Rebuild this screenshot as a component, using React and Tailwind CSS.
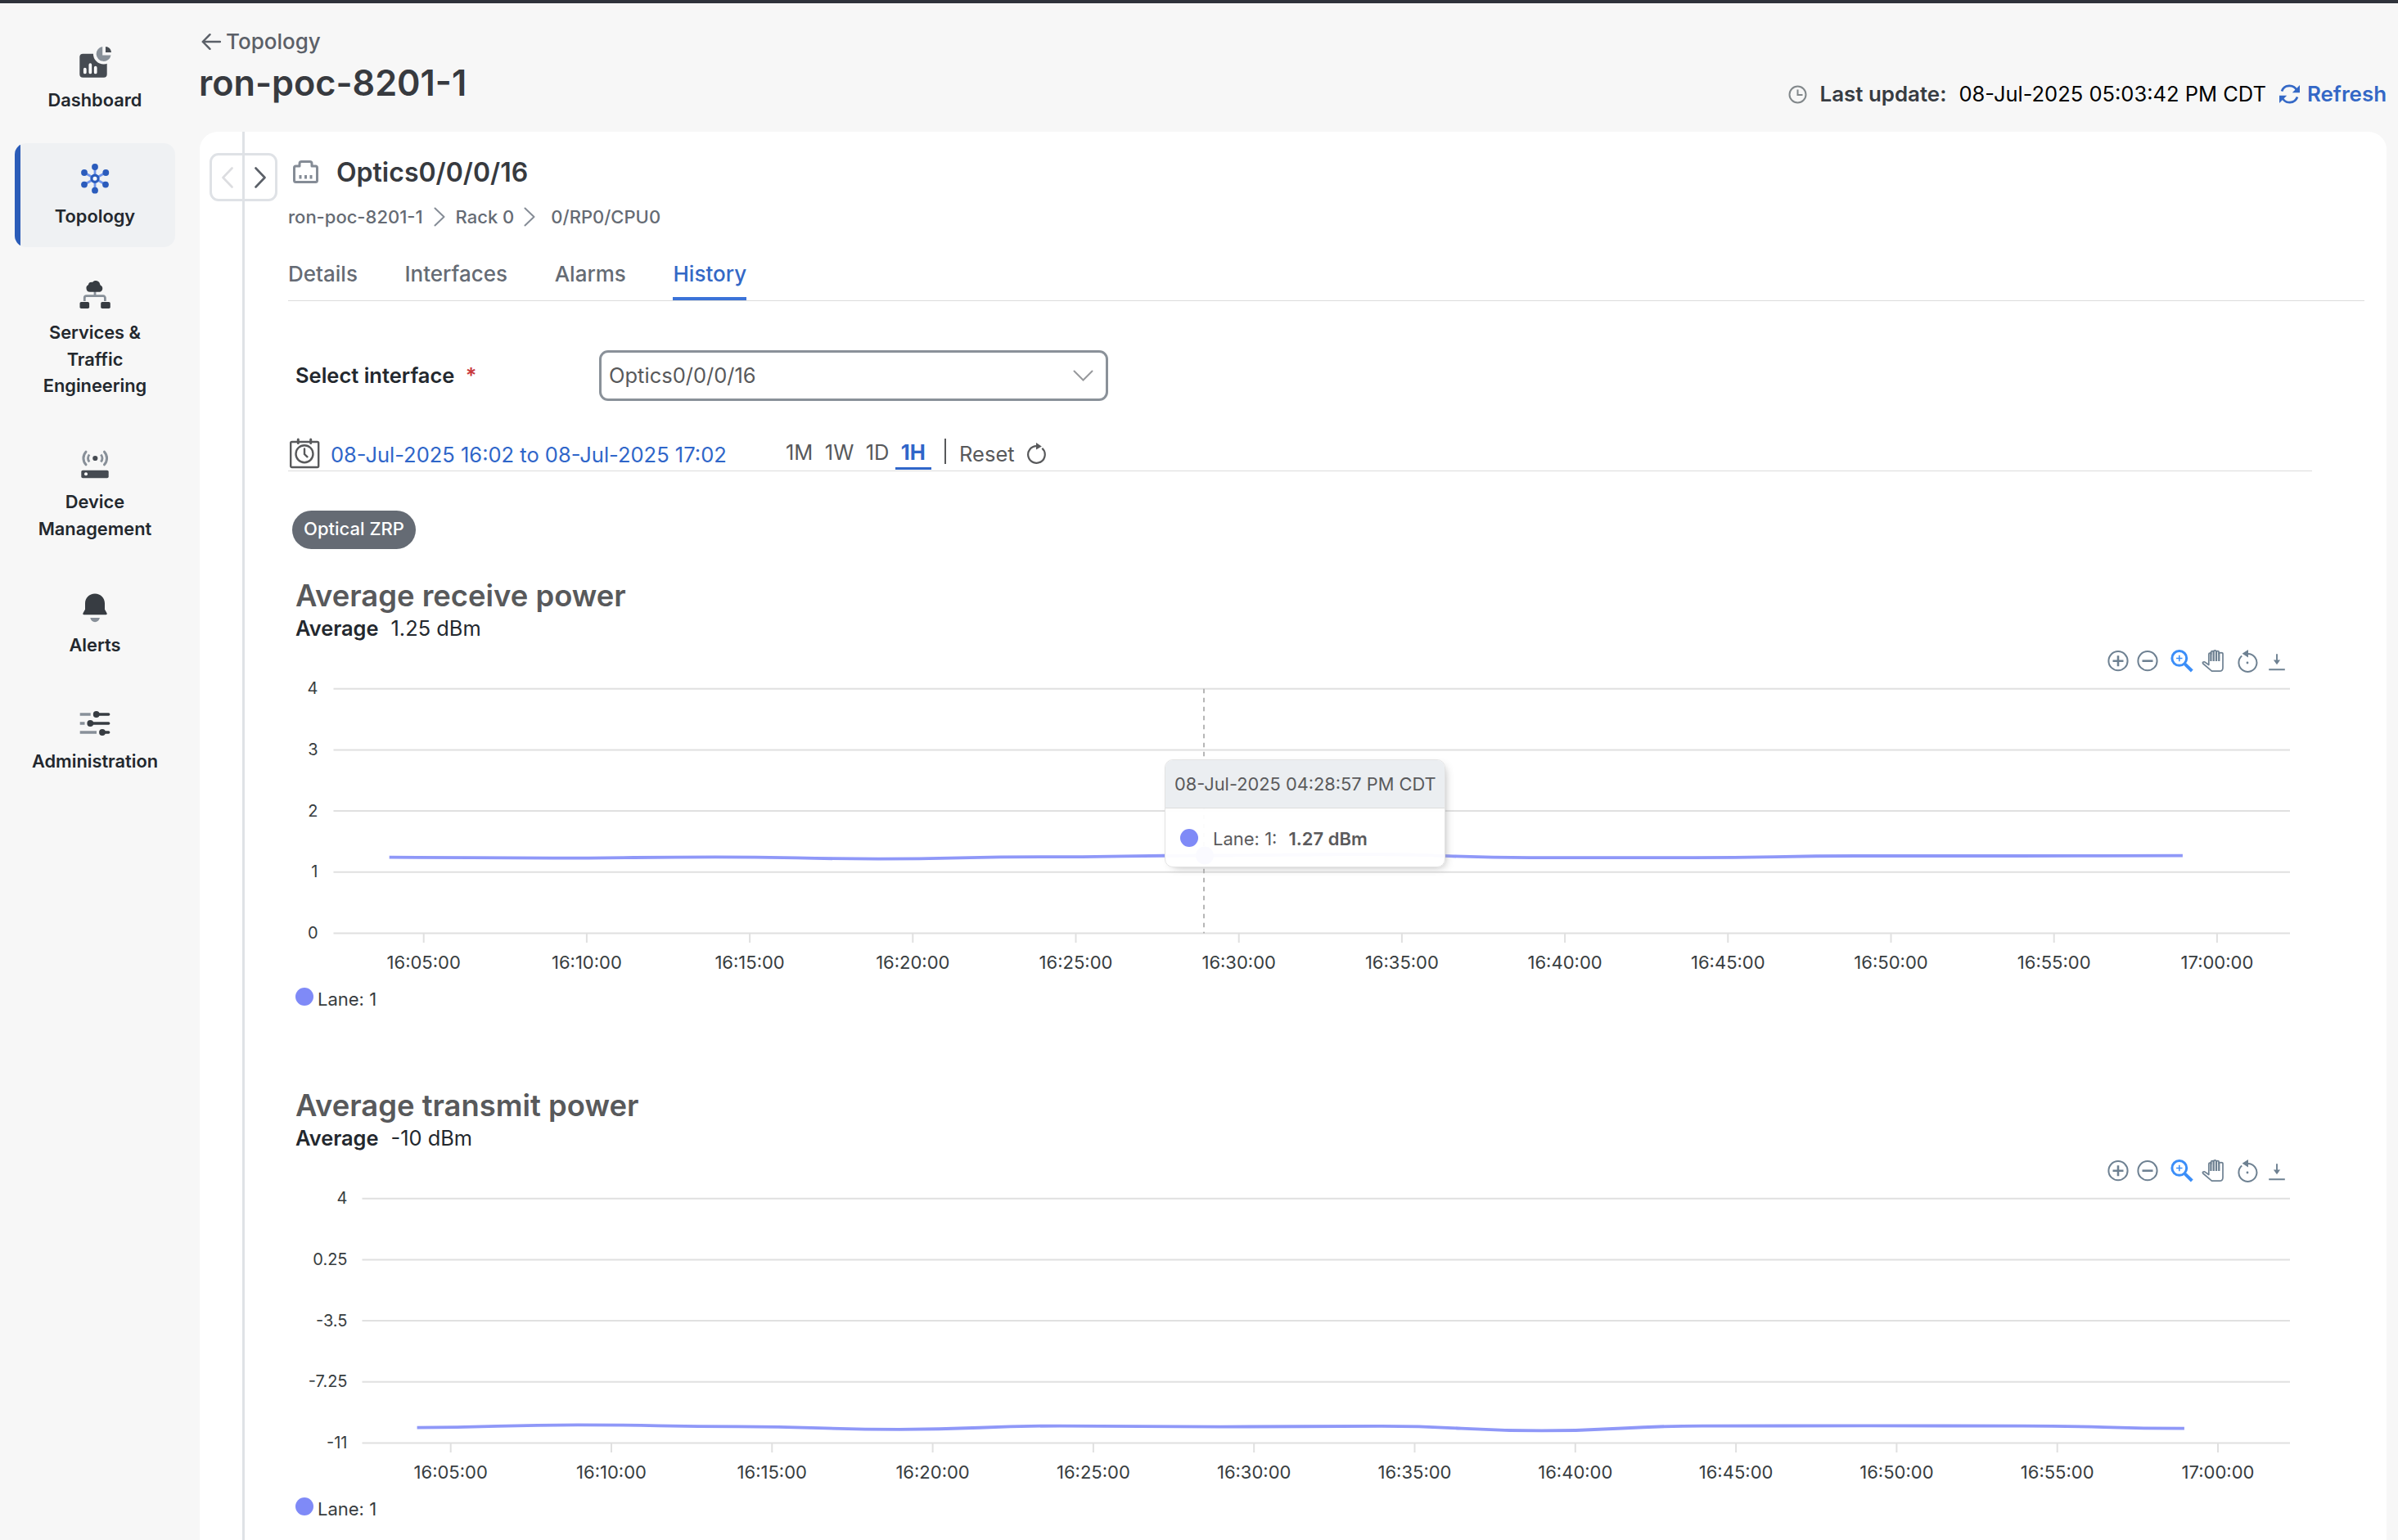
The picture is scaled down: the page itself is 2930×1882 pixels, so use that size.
import React, { useState } from 'react'

const navItems = [
  { id: 'dashboard', label: 'Dashboard' },
  { id: 'topology', label: 'Topology' },
  { id: 'services', label: 'Services & Traffic Engineering' },
  { id: 'device', label: 'Device Management' },
  { id: 'alerts', label: 'Alerts' },
  { id: 'admin', label: 'Administration' },
]

const tabs = ['Details', 'Interfaces', 'Alarms', 'History']
const ranges = ['1M', '1W', '1D', '1H']

const times = [
  '16:05:00', '16:10:00', '16:15:00', '16:20:00', '16:25:00', '16:30:00',
  '16:35:00', '16:40:00', '16:45:00', '16:50:00', '16:55:00', '17:00:00',
]

const receiveChart = {
  title: 'Average receive power',
  average: '1.25 dBm',
  yLabels: ['4', '3', '2', '1', '0'],
  left: 55.5,
  labelRight: 36.5,
  firstTick: 165.7,
  step: 199.2,
  firstPoint: 123.7,
  points: [225.7, 226.7, 225.3, 227.6, 225.2, 223.5, 222, 226.2, 226.2, 224, 224, 223.6],
}

const transmitChart = {
  title: 'Average transmit power',
  average: '-10 dBm',
  yLabels: ['4', '0.25', '-3.5', '-7.25', '-11'],
  left: 90.5,
  labelRight: 72.5,
  firstTick: 198.7,
  step: 196.3,
  firstPoint: 157.6,
  points: [299.6, 296.3, 298.4, 301.9, 297.6, 298.6, 297.9, 303.4, 297.6, 297.4, 297.6, 300.6],
}

const NavIcon = ({ id }) => {
  const dark = '#373c42'
  const grey = '#889099'
  return (
    <svg width="40" height="40" viewBox="0 0 40 40" fill="none" className="shrink-0">
      {id === 'dashboard' && (
        <>
          <rect x="1.3" y="9.7" width="33.4" height="29" rx="4" fill="#464b52" />
          <circle cx="30.7" cy="9.7" r="12.8" fill="#f7f7f7" />
          <path d="M29.2 1v10.4h10.3A9 9 0 1 1 29.2 1z" fill={grey} />
          <path d="M33 1a7.2 7.2 0 0 1 7 7h-7z" fill="#464b52" />
          <path d="M7.8 28.5v4M14.3 23.2v9.3M20.7 26.7v5.8" stroke="#fff" strokeWidth="3.7" strokeLinecap="round" />
        </>
      )}
      {id === 'topology' && (
        <>
          <path d="M20 6v29M7 13l26 14.5M33 13L7 27.5" stroke="#6f95ec" strokeWidth="2.8" />
          <circle cx="20" cy="20.3" r="4.1" fill="#fff" stroke="#2b5cbc" strokeWidth="3.2" />
          {[[20, 6], [20, 34.7], [7, 13], [33.3, 13], [7, 27.6], [33, 27.6]].map(([x, y]) => (
            <circle key={`${x}-${y}`} cx={x} cy={y} r="3.9" fill="#2b5cbc" />
          ))}
        </>
      )}
      {id === 'services' && (
        <>
          <path d="M20 16v6M7.3 28v-4a2.3 2.3 0 0 1 2.3-2.3h20.5a2.3 2.3 0 0 1 2.3 2.3v4" stroke={grey} strokeWidth="2.8" />
          <path d="M13.8 16.8a4.6 4.6 0 0 1-1.8-8.7c0-3 3-4 5-3.2 2.4-3 8-2.2 9 1.8l.6 1.8a4.4 4.4 0 0 1-.6 8.3z" fill={dark} />
          <rect x="1.5" y="29" width="11.6" height="8" rx="1.8" fill={dark} />
          <rect x="27.2" y="29" width="11.6" height="8" rx="1.8" fill={dark} />
        </>
      )}
      {id === 'device' && (
        <>
          <path d="M9 5.2a11.5 11.5 0 0 0 0 15.6M31.5 5.2a11.5 11.5 0 0 1 0 15.6" stroke={grey} strokeWidth="3" strokeLinecap="round" />
          <path d="M13.2 8.5a7.4 7.4 0 0 0 0 9M27.3 8.5a7.4 7.4 0 0 1 0 9" stroke={grey} strokeWidth="2.8" />
          <circle cx="20.3" cy="13" r="3.1" fill="#464b52" />
          <rect x="3.3" y="27.8" width="33.4" height="9.4" rx="1.8" fill="#464b52" />
          <circle cx="9" cy="32.3" r="2" fill="#fff" />
        </>
      )}
      {id === 'alerts' && (
        <>
          <path d="M20 3.5c-7 0-12 5-12 12v7.2l-2.5 4.5c-.5 1 0 2 1 2h27c1 0 1.5-1 1-2L32 22.7v-7.2c0-7-5-12-12-12z" fill={dark} />
          <path d="M14.3 33h11.6c-.6 3-3 5.2-5.8 5.2s-5.2-2.2-5.8-5.2z" fill={grey} />
        </>
      )}
      {id === 'admin' && (
        <>
          <path d="M1.7 9h13M1.7 20h5.8M1.7 31h20.3" stroke={grey} strokeWidth="3.4" />
          <path d="M21.7 9h15M14.3 20h22.4M29 31h7.7" stroke={dark} strokeWidth="3.4" strokeLinecap="round" />
          <circle cx="21.7" cy="9" r="3.9" fill={dark} />
          <circle cx="14.3" cy="20" r="3.9" fill={dark} />
          <circle cx="29" cy="31" r="3.9" fill={dark} />
        </>
      )}
    </svg>
  )
}

const Chevron = ({ className, width, height, strokeWidth = 2 }) => (
  <svg
    width={width}
    height={height}
    viewBox={`0 0 ${width} ${height}`}
    fill="none"
    stroke="currentColor"
    strokeWidth={strokeWidth}
    strokeLinecap="round"
    strokeLinejoin="round"
    className={className}
  >
    <path d={`M1.5 1.5L${width - 1.5} ${height / 2}L1.5 ${height - 1.5}`} />
  </svg>
)

const Sidebar = () => {
  const [active, setActive] = useState('topology')
  return (
    <nav className="flex w-[244px] shrink-0 flex-col gap-[15.4px] pt-[29px] pl-[18px]">
      {navItems.map((item) => (
        <button
          key={item.id}
          onClick={() => setActive(item.id)}
          className={`flex w-[196px] flex-col items-center rounded-[14px] px-4 pt-[23px] pb-[21px] text-center ${
            active === item.id ? 'bg-[linear-gradient(to_right,#2b5cb8_7px,#eff1f3_7px)]' : ''
          }`}
        >
          <NavIcon id={item.id} />
          <span className="mt-[10px] text-[21.8px] leading-[32.6px] font-semibold text-[#23282e]">{item.label}</span>
        </button>
      ))}
    </nav>
  )
}

const Toolbar = () => (
  <div className="mt-[7px] flex h-[28px] justify-end pr-[120px] text-[#6e8192]">
    <svg width="28" height="28" viewBox="0 0 28 28" fill="none" stroke="currentColor" strokeWidth="2">
      <circle cx="14" cy="13.7" r="11.6" />
      <path d="M14 7.2v13M7.5 13.7h13" strokeWidth="2.6" />
    </svg>
    <svg width="28" height="28" viewBox="0 0 28 28" fill="none" stroke="currentColor" strokeWidth="2" className="ml-[8px]">
      <circle cx="14" cy="13.7" r="11.6" />
      <path d="M7.5 13.7h13" strokeWidth="2.6" />
    </svg>
    <svg width="28" height="28" viewBox="0 0 28 28" fill="none" stroke="currentColor" className="ml-[14px] text-[#3b8ef8]">
      <circle cx="10.8" cy="10.4" r="8.9" strokeWidth="3" />
      <path d="M10.8 6.8v7.4M7.1 10.5h7.4" strokeWidth="1.5" />
      <path d="M17.5 17.3l8.8 8.7" strokeWidth="4" />
    </svg>
    <svg width="28" height="28" viewBox="0 0 28 28" fill="none" stroke="currentColor" className="ml-[10px]">
      <path
        d="M8.8 18.5V5.5c0-2 2.8-2 2.8 0V2.8c0-1.6 3-1.6 3 0V2c0-1.5 3.3-1.5 3.3 0v.8c0-1.6 3.3-1.6 3.3 0v2.4c0-2 4.8-2 4.8 0V22c0 2.5-1.3 4.2-4 4.2h-9.5L1.8 17c-1.2-1.5.6-2.8 2.2-1.9z"
        strokeWidth="1.7"
        strokeLinejoin="round"
      />
      <path d="M11.4 3v11M14.7 2v12M18 2v12M21.3 3v11" strokeWidth="2.3" />
    </svg>
    <svg width="28" height="28" viewBox="0 0 28 28" fill="none" stroke="currentColor" className="ml-[14.5px]">
      <path d="M14.5 4.9A11 11 0 1 1 7.2 7.6" strokeWidth="2" />
      <path d="M7.6 4.8L15 0v9.4z" fill="currentColor" stroke="none" />
      <circle cx="14" cy="16" r="1.4" fill="currentColor" stroke="none" />
    </svg>
    <svg width="28" height="28" viewBox="0 0 28 28" fill="none" stroke="currentColor" className="ml-[8px]">
      <path d="M14 5.3v9M4.2 24.3h19.6" strokeWidth="1.9" />
      <path d="M9.9 12.5h8.2L14 18.3z" fill="currentColor" stroke="none" />
    </svg>
  </div>
)

const GRID_TOP = 19.7
const GRID_GAP = 74.7
const GRID_BOTTOM = GRID_TOP + GRID_GAP * 4
const GRID_RIGHT = 2446

// smooth line: every segment eases in and out horizontally
const linePath = ({ points, firstPoint, step }) =>
  points
    .map((y, i) => {
      const x = firstPoint + step * i
      if (i === 0) return `M${x} ${y}`
      const mx = x - step / 2
      return `C${mx} ${points[i - 1]} ${mx} ${y} ${x} ${y}`
    })
    .join('')

const PowerChart = ({ chart, crosshair, children }) => (
  <section className="relative h-[623px] shrink-0">
    <h3 className="pl-[9px] text-[36.4px] leading-[44px] font-semibold text-[#58595b]">{chart.title}</h3>
    <p className="flex gap-[15px] pl-[9px] text-[25.4px] leading-[36.5px] text-[#23282e]">
      <span className="font-semibold">Average</span>
      <span>{chart.average}</span>
    </p>
    <Toolbar />
    <svg width="2473" height="375" viewBox="0 0 2473 375" className="block">
      {chart.yLabels.map((label, i) => (
        <g key={label}>
          <line
            x1={chart.left}
            x2={GRID_RIGHT}
            y1={GRID_TOP + GRID_GAP * i}
            y2={GRID_TOP + GRID_GAP * i}
            stroke="#e0e0e0"
            strokeWidth="2"
          />
          <text x={chart.labelRight} y={GRID_TOP + GRID_GAP * i + 6.5} textAnchor="end" className="fill-[#373d3f] text-[20px]">
            {label}
          </text>
        </g>
      ))}
      {times.map((time, i) => (
        <g key={time}>
          <line
            x1={chart.firstTick + chart.step * i}
            x2={chart.firstTick + chart.step * i}
            y1={GRID_BOTTOM}
            y2={GRID_BOTTOM + 11.5}
            stroke="#e0e0e0"
            strokeWidth="2"
          />
          <text x={chart.firstTick + chart.step * i} y="362" textAnchor="middle" className="fill-[#373d3f] text-[22px]">
            {time}
          </text>
        </g>
      ))}
      {crosshair && (
        <line x1="1119" x2="1119" y1={GRID_TOP} y2={GRID_BOTTOM} stroke="#b6b6b6" strokeWidth="2" strokeDasharray="5.5 5.5" />
      )}
      <path d={linePath(chart)} fill="none" stroke="#8f98f8" strokeWidth="3.8" />
      {crosshair && <circle cx="1120" cy="223.5" r="11" fill="#7f8af7" />}
    </svg>
    <div className="mt-[8px] flex items-start pl-[9px] text-[22px] leading-[32px] text-[#373d3f]">
      <span className="mt-[2px] mr-[5px] h-[22px] w-[22px] rounded-full bg-[#7f8af7]" />
      Lane: 1
    </div>
    {children}
  </section>
)

const Tooltip = () => (
  <div className="absolute top-[222px] left-[1071px] h-[132px] w-[343px] overflow-hidden rounded-[10px] border border-[#e3e3e3] bg-white/96 text-[22px] text-[#5a5a5c] shadow-[4px_4px_12px_-6px_#999]">
    <div className="flex h-[59px] items-center border-b border-[#dddddd] bg-[#ebeef1] pt-px pl-[11px] text-[21.8px] whitespace-nowrap">
      08-Jul-2025 04:28:57 PM CDT
    </div>
    <div className="flex h-[72px] items-center pl-[18px]">
      <span className="mr-[18px] h-[22px] w-[22px] rounded-full bg-[#7f8af7]" />
      <span className="pt-[3px]">Lane: 1:</span>
      <span className="pt-[3px] pl-[14px] font-semibold">1.27 dBm</span>
    </div>
  </div>
)

const Header = () => (
  <header className="flex h-[157px] shrink-0 justify-between pr-[14px]">
    <div className="pt-[29px]">
      <a className="flex items-center gap-[6px] text-[26px] leading-[36px] font-medium text-[#5b6068]">
        <svg width="26" height="22" viewBox="0 0 26 22" fill="none" stroke="currentColor" strokeWidth="2.4" strokeLinecap="round" strokeLinejoin="round">
          <path d="M25 11H4M12.5 2.2L3.7 11l8.8 8.8" />
        </svg>
        Topology
      </a>
      <h1 className="-ml-px text-[43.2px] leading-[65px] font-semibold text-[#373a3f]">ron-poc-8201-1</h1>
    </div>
    <div className="mt-[93px] flex h-[36px] items-center text-[25.9px]">
      <svg width="23" height="23" viewBox="0 0 23 23" fill="none" stroke="#82888b" strokeWidth="2">
        <circle cx="11.5" cy="11.5" r="10" />
        <path d="M11.5 5.5V12h6" />
      </svg>
      <span className="ml-[16px] font-semibold text-[#373c42]">Last update:</span>
      <span className="ml-[15px] text-[25.5px] text-black">08-Jul-2025 05:03:42 PM CDT</span>
      <button className="ml-[15px] flex items-center gap-[8px] font-semibold text-[#3468c6]">
        <svg width="27" height="26" viewBox="0 0 27 26" fill="none" stroke="currentColor" strokeWidth="2.7">
          <path d="M4 9.5a10 10 0 0 1 18.5-.8M23 16.5a10 10 0 0 1-18.5.8" />
          <path d="M26 2v9.2h-9.2zM1 24v-9.2h9.2z" fill="currentColor" stroke="none" />
        </svg>
        Refresh
      </button>
    </div>
  </header>
)

const PageNav = () => (
  <div className="absolute top-[26px] left-[12px] flex h-[59px] w-[83px] rounded-[11px] border-[3px] border-[#dfe2e6] bg-white">
    <button className="flex flex-1 items-center justify-center border-r-[3px] border-[#dfe2e6] text-[#dcdde0]">
      <Chevron width={14} height={26} strokeWidth={2.6} className="rotate-180" />
    </button>
    <button className="flex flex-1 items-center justify-center text-[#5b6068]">
      <Chevron width={14} height={26} strokeWidth={2.6} />
    </button>
  </div>
)

const RangeBar = ({ range, onChange }) => (
  <div className="mt-[40px] mr-[91px] flex h-[46px] shrink-0 items-start border-b border-[#dcdcdc] text-[25.5px] leading-[36px] text-[#58595b]">
    <svg width="40" height="40" viewBox="0 0 40 40" fill="none" stroke="currentColor" strokeWidth="2.4" strokeLinecap="round" className="mt-[4px] shrink-0">
      <rect x="3.2" y="6" width="34" height="31" rx="1.5" />
      <path d="M12.3 3v4.5M27.7 3v4.5" strokeWidth="3" />
      <circle cx="20" cy="20.7" r="10.5" />
      <path d="M20 14.5v6.5l3.5 3.3" />
    </svg>
    <span className="mt-[8px] ml-[12px] text-[#2f66c9]">08-Jul-2025 16:02 to 08-Jul-2025 17:02</span>
    <div className="ml-[65px] flex">
      {ranges.map((r) => (
        <button
          key={r}
          onClick={() => onChange(r)}
          className={`h-[44px] border-b-[3px] px-[7.2px] pt-[5px] ${
            r === range ? 'border-[#2f66c9] font-bold text-[#2f66c9]' : 'border-transparent'
          }`}
        >
          {r}
        </button>
      ))}
    </div>
    <span className="mt-[6px] ml-[16px] h-[31px] w-[2px] bg-[#58595b]" />
    <button className="mt-[7px] ml-[16px] flex items-center gap-[14px]">
      Reset
      <svg width="25" height="26" viewBox="0 0 25 26" fill="none" stroke="currentColor" strokeWidth="2.2" className="-mt-[2px]">
        <path d="M12.5 4.2A10.3 10.3 0 1 0 19.3 6.8" />
        <path d="M12 0l6.8 4.5L12 8.6z" fill="currentColor" stroke="none" />
      </svg>
    </button>
  </div>
)

const App = () => {
  const [tab, setTab] = useState('History')
  const [range, setRange] = useState('1H')

  return (
    <div className="flex h-screen flex-col overflow-hidden bg-[#f7f7f7] font-['Inter',sans-serif] antialiased">
      <div className="h-[4px] shrink-0 bg-[#2f333b]" />
      <div className="flex min-h-0 flex-1">
        <Sidebar />
        <div className="flex min-w-0 flex-1 flex-col">
          <Header />
          <main className="relative mr-[14px] flex min-h-0 flex-1 overflow-hidden rounded-t-[22px] bg-white">
            <div className="w-[55px] shrink-0 border-r-[3px] border-[#dfe2e6]" />
            <PageNav />
            <div className="flex min-w-0 flex-1 flex-col pt-[30px] pl-[53px]">
              <div className="flex shrink-0 items-center text-[32px] leading-[40px] font-semibold text-[#373a3f]">
                <svg width="44" height="32" viewBox="0 0 44 32" fill="none" stroke="#858c96" strokeWidth="3" strokeLinejoin="round">
                  <path d="M7.5 10a2 2 0 0 1 2-2H14V5a2.5 2.5 0 0 1 2.5-2.5h10A2.5 2.5 0 0 1 29 5v3h4.5a2 2 0 0 1 2 2v15.5a2 2 0 0 1-2 2h-24a2 2 0 0 1-2-2z" />
                  <path d="M15 19v4.5M21.5 19v4.5M28 19v4.5" />
                </svg>
                <span className="ml-[15px]">Optics0/0/0/16</span>
              </div>
              <div className="mt-[20px] flex shrink-0 items-center text-[22px] leading-[28px] font-medium text-[#656b74]">
                ron-poc-8201-1
                <Chevron width={14} height={24} className="mx-[13px] text-[#858c96]" />
                Rack 0
                <Chevron width={14} height={24} className="mr-[19px] ml-[12px] text-[#858c96]" />
                0/RP0/CPU0
              </div>
              <div className="mt-[37px] mr-[27px] flex h-[52px] shrink-0 gap-[57.6px] border-b border-[#dcdcdc] text-[26px] leading-[36px] font-medium text-[#656b74]">
                {tabs.map((t) => (
                  <button
                    key={t}
                    onClick={() => setTab(t)}
                    className={`h-[51px] border-b-[4px] pt-px pb-[10px] ${
                      t === tab ? 'border-[#3b73d8] text-[#3468c6]' : 'border-transparent'
                    }`}
                  >
                    {t}
                  </button>
                ))}
              </div>

              <div className="mt-[60px] flex h-[62px] shrink-0 items-center pl-[9px]">
                <label className="w-[371px] text-[25.5px] font-semibold text-[#23282e]">
                  Select interface <span className="pl-[7px] text-[#c8383c]">*</span>
                </label>
                <div className="flex h-[62px] w-[622px] items-center justify-between rounded-[11px] border-[3px] border-[#8a9199] pr-[15px] pl-[9px] text-[25.5px] text-[#58595b]">
                  Optics0/0/0/16
                  <svg width="25" height="14" viewBox="0 0 25 14" fill="none" stroke="#97999c" strokeWidth="2" strokeLinecap="round">
                    <path d="M1.5 1.5l11 11 11-11" />
                  </svg>
                </div>
              </div>

              <RangeBar range={range} onChange={setRange} />

              <div className="mt-[48px] mb-[35px] ml-[5px] h-[47px] w-[151px] shrink-0 rounded-full bg-[#656b74] pt-[6px] text-center text-[22px] leading-[33px] font-medium text-white">
                Optical ZRP
              </div>

              <PowerChart chart={receiveChart} crosshair>
                <Tooltip />
              </PowerChart>
              <PowerChart chart={transmitChart} />
            </div>
          </main>
        </div>
      </div>
    </div>
  )
}

export default App
